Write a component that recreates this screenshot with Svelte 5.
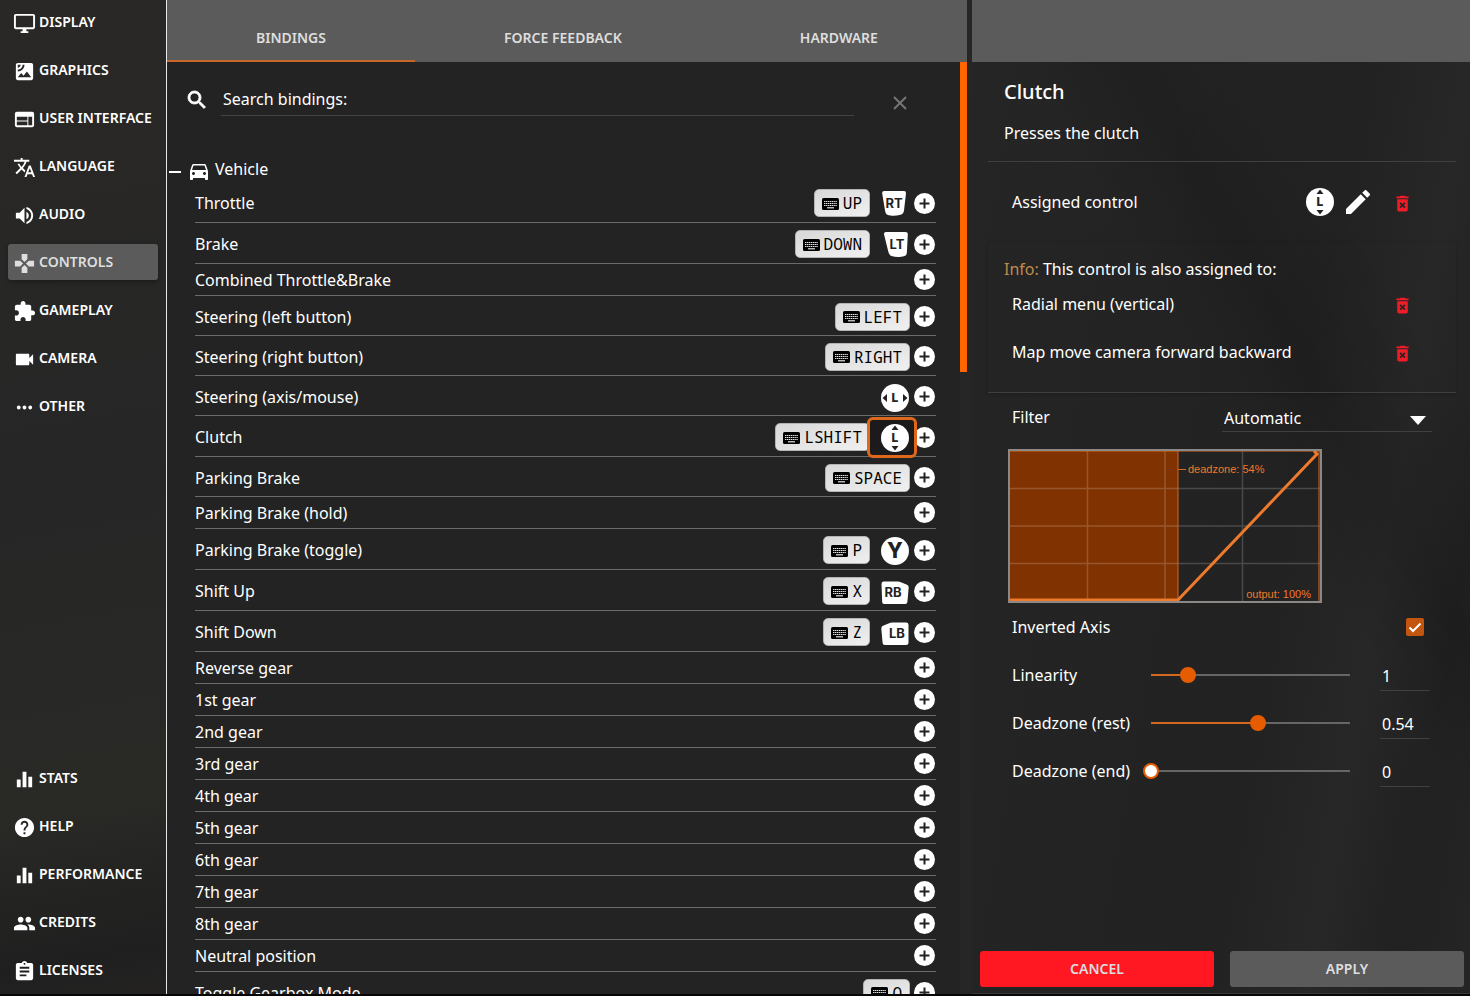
<script>
    const icons = {
        display: "M21 2H3c-1.1 0-2 .9-2 2v12c0 1.1.9 2 2 2h7v2H8v2h8v-2h-2v-2h7c1.1 0 2-.9 2-2V4c0-1.1-.9-2-2-2zm0 14H3V4h18v12z",
        graphics: "M19 3H5c-1.1 0-2 .9-2 2v14c0 1.1.9 2 2 2h14c1.1 0 2-.9 2-2V5c0-1.1-.9-2-2-2zM5 4.99h3C8 6.65 6.66 8 5 8V4.99zM5 12v-2c2.76 0 5-2.25 5-5.01h2C12 8.86 8.87 12 5 12zm0 6l3.5-4.5 2.5 3.01L14.5 12l4.5 6H5z",
        web: "M20 4H4c-1.1 0-1.99.9-1.99 2L2 18c0 1.1.9 2 2 2h16c1.1 0 2-.9 2-2V6c0-1.1-.9-2-2-2zm-5 14H4v-4h11v4zm0-5H4V9h11v4zm5 5h-4V9h4v9z",
        language: "M12.87 15.07l-2.54-2.51.03-.03c1.74-1.94 2.98-4.17 3.71-6.53H17V4h-7V2H8v2H1v1.99h11.17C11.5 7.92 10.44 9.75 9 11.35 8.07 10.32 7.3 9.19 6.69 8h-2c.73 1.63 1.73 3.17 2.98 4.56l-5.09 5.02L4 19l5-5 3.11 3.11.76-2.04zM18.5 10h-2L12 22h2l1.12-3h4.75L21 22h2l-4.5-12zm-2.62 7l1.62-4.33L19.12 17h-3.24z",
        audio: "M3 9v6h4l5 5V4L7 9H3zm13.5 3c0-1.77-1.02-3.29-2.5-4.03v8.05c1.48-.73 2.5-2.25 2.5-4.02zM14 3.23v2.06c2.89.86 5 3.54 5 6.71s-2.11 5.85-5 6.71v2.06c4.01-.91 7-4.49 7-8.77s-2.99-7.86-7-8.77z",
        controls: "M15 7.5V2H9v5.5l3 3 3-3zM7.5 9H2v6h5.5l3-3-3-3zM9 16.5V22h6v-5.5l-3-3-3 3zM16.5 9l-3 3 3 3H22V9h-5.5z",
        gameplay: "M20.5 11H19V7c0-1.1-.9-2-2-2h-4V3.5C13 2.12 11.88 1 10.5 1S8 2.12 8 3.5V5H4c-1.1 0-1.99.9-1.99 2v3.8H3.5c1.49 0 2.7 1.21 2.7 2.7s-1.21 2.7-2.7 2.7H2V20c0 1.1.9 2 2 2h3.8v-1.5c0-1.49 1.21-2.7 2.7-2.7 1.49 0 2.7 1.21 2.7 2.7V22H17c1.1 0 2-.9 2-2v-4h1.5c1.38 0 2.5-1.12 2.5-2.5S21.88 11 20.5 11z",
        camera: "M17 10.5V7c0-.55-.45-1-1-1H4c-.55 0-1 .45-1 1v10c0 .55.45 1 1 1h12c.55 0 1-.45 1-1v-3.5l4 4v-11l-4 4z",
        other: "M6 10c-1.1 0-2 .9-2 2s.9 2 2 2 2-.9 2-2-.9-2-2-2zm12 0c-1.1 0-2 .9-2 2s.9 2 2 2 2-.9 2-2-.9-2-2-2zm-6 0c-1.1 0-2 .9-2 2s.9 2 2 2 2-.9 2-2-.9-2-2-2z",
        stats: "M10 20h4V4h-4v16zm-6 0h4v-8H4v8zM16 9v11h4V9h-4z",
        help: "M12 2C6.48 2 2 6.48 2 12s4.48 10 10 10 10-4.48 10-10S17.52 2 12 2zm1 17h-2v-2h2v2zm2.07-7.75l-.9.92C13.45 12.9 13 13.5 13 15h-2v-.5c0-1.1.45-2.1 1.17-2.83l1.24-1.26c.37-.36.59-.86.59-1.41 0-1.1-.9-2-2-2s-2 .9-2 2H8c0-2.21 1.79-4 4-4s4 1.79 4 4c0 .88-.36 1.68-.93 2.25z",
        credits: "M16 11c1.66 0 2.99-1.34 2.99-3S17.66 5 16 5c-1.66 0-3 1.34-3 3s1.34 3 3 3zm-8 0c1.66 0 2.99-1.34 2.99-3S9.66 5 8 5C6.34 5 5 6.34 5 8s1.34 3 3 3zm0 2c-2.33 0-7 1.17-7 3.5V19h14v-2.5c0-2.33-4.67-3.5-7-3.5zm8 0c-.29 0-.62.02-.97.05 1.16.84 1.97 1.97 1.97 3.45V19h6v-2.5c0-2.33-4.67-3.5-7-3.5z",
        licenses: "M19 3h-4.18C14.4 1.84 13.3 1 12 1c-1.3 0-2.4.84-2.82 2H5c-1.1 0-2 .9-2 2v14c0 1.1.9 2 2 2h14c1.1 0 2-.9 2-2V5c0-1.1-.9-2-2-2zm-7 0c.55 0 1 .45 1 1s-.45 1-1 1-1-.45-1-1 .45-1 1-1zm2 14H7v-2h7v2zm3-4H7v-2h10v2zm0-4H7V7h10v2z",
        search: "M15.5 14h-.79l-.28-.27C15.41 12.59 16 11.11 16 9.5 16 5.91 13.09 3 9.5 3S3 5.91 3 9.5 5.91 16 9.5 16c1.61 0 3.09-.59 4.23-1.57l.27.28v.79l5 4.99L20.49 19l-4.99-5zm-6 0C7.01 14 5 11.99 5 9.5S7.01 5 9.5 5 14 7.01 14 9.5 11.99 14 9.5 14z",
        car: "M18.92 6.01C18.72 5.42 18.16 5 17.5 5h-11c-.66 0-1.21.42-1.42 1.01L3 12v8c0 .55.45 1 1 1h1c.55 0 1-.45 1-1v-1h12v1c0 .55.45 1 1 1h1c.55 0 1-.45 1-1v-8l-2.08-5.99zM6.5 16c-.83 0-1.5-.67-1.5-1.5S5.67 13 6.5 13s1.5.67 1.5 1.5S7.33 16 6.5 16zm11 0c-.83 0-1.5-.67-1.5-1.5s.67-1.5 1.5-1.5 1.5.67 1.5 1.5-.67 1.5-1.5 1.5zM5 11l1.5-4.5h11L19 11H5z",
        edit: "M3 17.25V21h3.75L17.81 9.94l-3.75-3.75L3 17.25zM20.71 7.04c.39-.39.39-1.02 0-1.41l-2.34-2.34c-.39-.39-1.02-.39-1.41 0l-1.83 1.83 3.75 3.75 1.83-1.83z",
        trash: "M6 19c0 1.1.9 2 2 2h8c1.1 0 2-.9 2-2V7H6v12zm2.46-7.12l1.41-1.41L12 12.59l2.12-2.12 1.41 1.41L13.41 14l2.12 2.12-1.41 1.41L12 15.41l-2.12 2.12-1.41-1.41L10.59 14l-2.13-2.12zM15.5 4l-1-1h-5l-1 1H5v2h14V4z",
    };

    const menuTop = [
        ["display", "Display"],
        ["graphics", "Graphics"],
        ["web", "User interface"],
        ["language", "Language"],
        ["audio", "Audio"],
        ["controls", "Controls"],
        ["gameplay", "Gameplay"],
        ["camera", "Camera"],
        ["other", "Other"],
    ];
    const menuBottom = [
        ["stats", "Stats"],
        ["help", "Help"],
        ["stats", "Performance"],
        ["credits", "Credits"],
        ["licenses", "Licenses"],
    ];
    const tabs = ["Bindings", "Force Feedback", "Hardware"];

    const bindings = [
        { name: "Throttle", key: "UP", pad: "RT" },
        { name: "Brake", key: "DOWN", pad: "LT" },
        { name: "Combined Throttle&Brake" },
        { name: "Steering (left button)", key: "LEFT" },
        { name: "Steering (right button)", key: "RIGHT" },
        { name: "Steering (axis/mouse)", pad: "LX" },
        { name: "Clutch", key: "LSHIFT", pad: "LY" },
        { name: "Parking Brake", key: "SPACE" },
        { name: "Parking Brake (hold)" },
        { name: "Parking Brake (toggle)", key: "P", pad: "Y" },
        { name: "Shift Up", key: "X", pad: "RB" },
        { name: "Shift Down", key: "Z", pad: "LB" },
        { name: "Reverse gear" },
        { name: "1st gear" },
        { name: "2nd gear" },
        { name: "3rd gear" },
        { name: "4th gear" },
        { name: "5th gear" },
        { name: "6th gear" },
        { name: "7th gear" },
        { name: "8th gear" },
        { name: "Neutral position" },
        { name: "Toggle Gearbox Mode", key: "Q" },
    ];
    const conflicts = ["Radial menu (vertical)", "Map move camera forward backward"];

    let page = $state("Controls");
    let tab = $state("Bindings");
    let selected = $state("Clutch");
    let search = $state("");
    let inverted = $state(true);
    let filter = $state("Automatic");
    let sliders = $state([
        { id: "linearity", name: "Linearity", min: 0.1, max: 5, value: 1 },
        { id: "deadzone-rest", name: "Deadzone (rest)", min: 0, max: 1, value: 0.54 },
        { id: "deadzone-end", name: "Deadzone (end)", min: 0, max: 1, value: 0 },
    ]);

    let shown = $derived(bindings.filter((b) => b.name.toLowerCase().includes(search.toLowerCase())));
    let dead = $derived(sliders[1].value);
    let deadX = $derived(Math.round(dead * 310) + 1);

    function fill(s) {
        return (s.value - s.min) / (s.max - s.min);
    }
</script>

{#snippet icon(name)}
    <svg class="icon" viewBox="0 0 24 24" aria-hidden="true"><path d={icons[name]} /></svg>
{/snippet}

{#snippet padIcon(type)}
    <svg class="pad-icon" viewBox="0 0 28 28" aria-hidden="true">
        {#if type === "RT"}
            <path d="M3.5 1h19.500q2.200 0 2 2.200l-2 17.300q-.4 3.400-3.500 4.300-4 1.200-8.500 1-3.800-.2-5.200-1.300-1.200-.9-1.600-3L1.200 3.400Q1 1 3.500 1z" />
            <text x="13" y="18">RT</text>
        {:else if type === "LT"}
            <path d="M5 1h19.500q2.500 0 2.300 2.400l-.9 18.100q-.2 2.500-1.700 3.200-1.900 1.100-5.700 1.300-4.500.2-8-.9-2.600-.9-3.100-4L3 3.200Q2.800 1 5 1z" />
            <text x="16" y="18">LT</text>
        {:else if type === "RB"}
            <path d="M2.500 3.500h14q2 0 4 .9l5.500 2.300q1.800.8 1.700 2.800l-1.300 14.500q-.2 2-2.200 2H3q-1.600 0-1.800-1.800L.5 6q-.1-2.500 2-2.500z" />
            <text x="12" y="19">RB</text>
        {:else if type === "LB"}
            <path d="M25.500 3.500h-14q-2 0-4 .9L2 6.700Q.2 7.500.3 9.500L1.600 24q.2 2 2.200 2H25q2.500 0 2.500-2V6q0-2.500-2-2.500z" />
            <text x="16" y="19">LB</text>
        {:else}
            <circle cx="14" cy="14" r="14" />
            {#if type === "Y"}
                <text class="big" x="14" y="21">Y</text>
            {:else}
                <text class="small" x="14" y="18">L</text>
                {#if type === "LX"}
                    <path class="arrow" d="M6 10v8l-4.500-4zM22 10v8l4.500-4z" />
                {:else}
                    <path class="arrow" d="M10.500 6h7L14 1.500zM10.500 22h7L14 26.500z" />
                {/if}
            {/if}
        {/if}
    </svg>
{/snippet}

{#snippet menuItem(item)}
    <button class="menu-item" class:active={page === item[1]} onclick={() => (page = item[1])}>
        {@render icon(item[0])}
        <span>{item[1]}</span>
    </button>
{/snippet}

<div class="options">
    <nav class="sidebar">
        <div class="menu">
            {#each menuTop as item}
                {@render menuItem(item)}
            {/each}
        </div>
        <div class="menu">
            {#each menuBottom as item}
                {@render menuItem(item)}
            {/each}
        </div>
    </nav>

    <main class="bindings">
        <div class="tabs">
            {#each tabs as t}
                <button class:active={tab === t} onclick={() => (tab = t)}>{t}</button>
            {/each}
        </div>
        <div class="scroll">
            <div class="content">
                <div class="search">
                    <label for="search" aria-label="Search bindings">{@render icon("search")}</label>
                    <input id="search" type="text" placeholder="Search bindings:" bind:value={search} />
                    <button aria-label="Clear search" onclick={() => (search = "")}>
                        <svg viewBox="0 0 14 14"><path d="M1 1l12 12M13 1L1 13" /></svg>
                    </button>
                </div>
                <h2 class="category">
                    <span class="dash"></span>
                    {@render icon("car")}
                    <span>Vehicle</span>
                </h2>
                <ul>
                    {#each shown as b}
                        <li class:bound={b.key || b.pad} class:both={b.key && b.pad}>
                            <span class="name">{b.name}</span>
                            {#if b.key}
                                <button class="key">
                                    <svg viewBox="0 0 17 12" aria-hidden="true">
                                        <rect width="17" height="12" rx="1.500" />
                                        <path class="keys" d="M2 3.500h13M2 5.500h13M2 7.500h13" />
                                        <path class="space" d="M5 9.800h7" />
                                    </svg>
                                    <span>{b.key}</span>
                                </button>
                            {/if}
                            {#if b.pad}
                                <button class="pad" class:selected={selected === b.name} aria-label={b.pad} onclick={() => (selected = b.name)}>
                                    {@render padIcon(b.pad)}
                                </button>
                            {/if}
                            <button class="add" aria-label="Add binding">
                                <svg viewBox="0 0 21 21"><circle cx="10.500" cy="10.500" r="10.500" /><path d="M10.500 5.500v10M5.500 10.500h10" /></svg>
                            </button>
                        </li>
                    {/each}
                </ul>
            </div>
            <div class="scrollbar"><div class="thumb"></div></div>
        </div>
    </main>

    <aside class="details">
        <div class="bar"></div>
        <div class="info">
            <h1>Clutch</h1>
            <p>Presses the clutch</p>
        </div>
        <div class="line assigned">
            <span class="name">Assigned control</span>
            {@render padIcon("LY")}
            <button class="edit" aria-label="Edit">{@render icon("edit")}</button>
            <button class="delete" aria-label="Remove">{@render icon("trash")}</button>
        </div>
        <div class="conflicts">
            <p><span class="warn">Info:</span> This control is also assigned to:</p>
            {#each conflicts as c}
                <div class="line">
                    <span class="name">{c}</span>
                    <button class="delete" aria-label="Remove">{@render icon("trash")}</button>
                </div>
            {/each}
        </div>
        <div class="filter">
            <label for="filter">Filter</label>
            <div class="select">
                <select id="filter" bind:value={filter}>
                    <option>Automatic</option>
                    <option>Direct</option>
                </select>
                <svg viewBox="0 0 16 9" aria-hidden="true"><path d="M0 0h16L8 9z" /></svg>
            </div>
        </div>
        <svg class="graph" viewBox="0 0 310 150">
            <path class="grid" d="M232.500 0v150M0 37.500h310M0 75h310M0 112.500h310" />
            <rect class="dead" width={deadX} height="150" />
            <path class="grid" d="M77.500 0v150M155 0v150M0 37.500h{deadX}M0 75h{deadX}M0 112.500h{deadX}" />
            <path class="edge" d="M{deadX} 0v150M{deadX} 18.500h8M0 0h310M309 0v150" />
            <path class="curve" d="M0 149h{deadX}L307 3l-3-3" />
            <text x={deadX + 10} y="22">deadzone: {Math.round(dead * 100)}%</text>
            <text x="301" y="147" text-anchor="end">output: 100%</text>
        </svg>
        <div class="line check">
            <label class="name" for="inverted">Inverted Axis</label>
            <input id="inverted" type="checkbox" bind:checked={inverted} />
            <svg viewBox="0 0 18 18" aria-hidden="true"><path d="M3.500 9.500l3.500 3.500L14.500 5.500" /></svg>
        </div>
        {#each sliders as s}
            <div class="slider">
                <label for={s.id}>{s.name}</label>
                <input id={s.id} type="range" class:zero={s.value === s.min} min={s.min} max={s.max} step="0.01" style="--fill: {fill(s)}" bind:value={s.value} />
                <input type="text" aria-label={s.name} bind:value={s.value} />
            </div>
        {/each}
        <div class="actions">
            <button class="cancel">Cancel</button>
            <button>Apply</button>
        </div>
    </aside>
</div>

<style>
    :global(body) {
        margin: 0;
        background: #000;
    }

    .options {
        display: grid;
        grid-template-columns: 166px minmax(0, 1fr) 498px;
        grid-template-rows: minmax(0, 1fr);
        height: 100vh;
        box-sizing: border-box;
        border-bottom: 2px solid #080606;
        background: #262626;
        color: #fff;
        font-family: "Noto Sans", "Open Sans", sans-serif;
        font-size: 16px;
        font-weight: 450;
        line-height: 24px;
        overflow: hidden;
    }

    button {
        padding: 0;
        border: none;
        background: none;
        color: inherit;
        font: inherit;
        cursor: pointer;
    }

    svg {
        display: block;
        flex: none;
    }

    h1, h2, p, ul {
        margin: 0;
        padding: 0;
    }

    .icon {
        width: 24px;
        height: 24px;
        fill: #fff;
    }

    .name {
        flex: 1;
    }

    .sidebar {
        display: flex;
        flex-direction: column;
        justify-content: space-between;
        padding: 4px 8px 6px;
        background: linear-gradient(170deg, #292826 0%, #262626 50%, #292926 80%, #1f1f1f 95%, #242322 100%);
    }

    .menu {
        display: flex;
        flex-direction: column;
        gap: 12px;
    }

    .menu-item {
        display: flex;
        align-items: center;
        gap: 3px;
        height: 36px;
        padding: 0 5px;
        border-radius: 3px;
        font-size: 14px;
        font-weight: 600;
        text-transform: uppercase;
        white-space: nowrap;
    }

    .menu-item .icon {
        width: 23px;
        height: 23px;
        margin-top: 3px;
    }

    .menu-item.active {
        background: #5b5b5b;
        box-shadow: 0 2px 4px rgba(0, 0, 0, 0.3);
        color: #dedede;
    }

    .menu-item.active .icon {
        fill: #dedede;
    }

    .bindings {
        display: flex;
        flex-direction: column;
        border-left: 1px solid #e8e8e8;
        background: #232323;
        margin-right: 5px;
    }

    .tabs {
        display: flex;
        height: 62px;
        flex: none;
        background: #5b5b5b;
    }

    .tabs button {
        flex: 1 1 auto;
        padding: 16px 0 0;
        border-bottom: 2px solid transparent;
        color: #dedede;
        font-size: 14px;
        font-weight: 600;
        text-transform: uppercase;
    }

    .tabs button.active {
        border-color: #c8672a;
    }

    .scroll {
        display: flex;
        flex: 1;
        min-height: 0;
    }

    .content {
        flex: 1;
        overflow: hidden;
    }

    .scrollbar {
        width: 7px;
        background: #262626;
    }

    .thumb {
        height: 33.3%;
        background: #ff6600;
    }

    .search {
        display: flex;
        align-items: center;
        padding: 22px 53px 0 18px;
    }

    .search .icon {
        stroke: #fff;
        stroke-width: 0.8;
    }

    .search input {
        flex: 1;
        height: 32px;
        margin: 0 39px 0 12px;
        padding: 0 2px 2px;
        box-sizing: border-box;
        border: none;
        border-bottom: 1px solid #444;
        background: none;
        color: #fff;
        font: inherit;
        outline: none;
    }

    .search input::placeholder {
        color: #fff;
        opacity: 1;
    }

    .search button svg {
        width: 14px;
        height: 14px;
        margin-top: 6px;
        fill: none;
        stroke: #757575;
        stroke-width: 2;
    }

    .category {
        display: flex;
        align-items: center;
        gap: 4px;
        height: 24px;
        margin-top: 41px;
        margin-bottom: 1px;
        padding-left: 2px;
        font-size: 16px;
        font-weight: 450;
    }

    .category .icon {
        margin-top: 4px;
    }

    .dash {
        width: 12px;
        height: 2px;
        margin: 6px 2px 0 0;
        background: #fff;
    }

    ul {
        padding: 0 24px 0 28px;
        list-style: none;
    }

    li {
        display: flex;
        align-items: center;
        height: 32px;
        padding-right: 1px;
        box-sizing: border-box;
        border-bottom: 1px solid #6b6b6b;
    }

    li.bound {
        height: 40px;
        padding-top: 2px;
    }

    li.both {
        height: 41px;
    }

    .key {
        display: flex;
        align-items: center;
        gap: 4px;
        height: 28px;
        margin-right: 4px;
        padding: 0 7px;
        border: 1px solid #b4b4b4;
        border-radius: 5px;
        background: linear-gradient(160deg, #d8d8d8, #f0f0f0);
        color: #000;
        font-family: "Noto Sans Mono", "DejaVu Sans Mono", monospace;
        font-size: 16px;
        font-weight: 400;
        box-sizing: border-box;
    }

    .key svg {
        width: 17px;
        height: 12px;
        margin-top: 1px;
    }

    .keys {
        stroke: #e4e4e4;
        stroke-width: 1;
        stroke-dasharray: 1.4 0.5;
    }

    .space {
        stroke: #e4e4e4;
        stroke-width: 1.2;
    }

    .pad-icon {
        width: 28px;
        height: 28px;
        fill: #fff;
    }

    .pad-icon text {
        fill: #222;
        font-family: Inter, "Liberation Sans", sans-serif;
        font-size: 13px;
        font-weight: 700;
        text-anchor: middle;
    }

    .pad-icon .big {
        font-size: 21px;
        font-weight: 800;
    }

    .pad-icon .small {
        font-size: 12px;
        font-weight: 800;
    }

    .pad-icon .arrow {
        fill: #222;
    }

    .pad {
        position: relative;
        z-index: 1;
        margin: 2px 5px 0 7px;
    }

    .pad.selected::before {
        content: "";
        position: absolute;
        inset: -7px -8px -6px -14px;
        z-index: -1;
        border: 3px solid #e0681c;
        border-radius: 6px;
        background: #1c1a1a;
    }

    .add {
        width: 21px;
        height: 21px;
    }

    .add svg {
        width: 21px;
        height: 21px;
        fill: #fff;
        stroke: none;
    }

    .add path {
        stroke: #222;
        stroke-width: 2;
    }

    .details {
        display: flex;
        flex-direction: column;
        background:
            linear-gradient(60deg, transparent 55%, rgba(0, 0, 0, 0.12) 65%, transparent 78%),
            linear-gradient(100deg, #252525 0%, #222 60%, #272727 76%, #212121 88%, #252525 100%);
        border-bottom: 1px solid #3a3838;
    }

    .bar {
        height: 62px;
        background: #5b5b5b;
    }

    .info {
        margin: 0 14px 0 16px;
        padding: 16px 16px 16px;
        border-bottom: 1px solid #404040;
    }

    .info h1 {
        margin-bottom: 16px;
        font-size: 20px;
        font-weight: 500;
        line-height: 27px;
    }

    .line {
        display: flex;
        align-items: center;
        height: 48px;
        padding: 0 57px 0 40px;
    }

    .assigned {
        height: 80px;
    }

    .edit .icon {
        width: 32px;
        height: 32px;
        margin: 0 18px 0 8px;
    }

    .delete .icon {
        width: 21px;
        height: 21px;
        margin-top: 3px;
        fill: #f01c28;
    }

    .conflicts {
        margin: 0 14px 0 16px;
        padding: 15px 0 16px;
        border-bottom: 1px solid #404040;
        box-shadow: 0 1px 4px rgba(0, 0, 0, 0.2);
    }

    .conflicts p {
        height: 23px;
        padding-left: 16px;
    }

    .conflicts .line {
        padding: 0 43px 0 24px;
    }

    .warn {
        color: #c08a4c;
        font-weight: 400;
    }

    .filter {
        display: flex;
        justify-content: space-between;
        height: 40px;
        margin: 0 38px 0 40px;
        padding-top: 12px;
    }

    .select {
        position: relative;
        width: 210px;
    }

    .select select {
        width: 100%;
        height: 27px;
        padding: 0 2px;
        border: none;
        border-bottom: 1px solid #404040;
        border-radius: 0;
        background: none;
        color: #fff;
        font: inherit;
        line-height: 26px;
        appearance: none;
        outline: none;
    }

    .select option {
        background: #262626;
    }

    .select svg {
        position: absolute;
        top: 11px;
        right: 6px;
        width: 16px;
        height: 9px;
        fill: #fff;
        pointer-events: none;
    }

    .graph {
        width: 310px;
        height: 150px;
        margin: 4px 0 0 36px;
        border: 2px solid #8c8886;
    }

    .grid {
        fill: none;
        stroke: rgba(255, 255, 255, 0.18);
        stroke-width: 1.5;
    }

    .dead {
        fill: #803300;
    }

    .edge {
        fill: none;
        stroke: #d2691e;
    }

    .curve {
        fill: none;
        stroke: #ee7a2c;
        stroke-width: 3;
    }

    .graph text {
        fill: #ee7a2c;
        font-family: "Liberation Sans", Arial, sans-serif;
        font-size: 11px;
        font-weight: 400;
    }

    .check {
        padding-right: 46px;
    }

    .check input {
        width: 18px;
        height: 18px;
        margin: 0;
        border-radius: 2px;
        background: #444;
        appearance: none;
    }

    .check input:checked {
        background: #c4550f;
    }

    .check svg {
        width: 18px;
        height: 18px;
        margin-left: -18px;
        z-index: 1;
        fill: none;
        stroke: #fff;
        stroke-width: 2;
        pointer-events: none;
    }

    .slider {
        display: flex;
        align-items: center;
        height: 48px;
        padding: 0 40px;
    }

    .slider label {
        width: 131px;
    }

    .slider input[type="range"] {
        flex: 1;
        min-width: 0;
        height: 16px;
        margin: 0 22px 0 0;
        appearance: none;
        background:
            linear-gradient(#d2691e, #d2691e) 8px center / calc((100% - 16px) * var(--fill)) 2px no-repeat,
            linear-gradient(#666, #666) 8px center / calc(100% - 16px) 2px no-repeat;
    }

    .slider input[type="range"]::-webkit-slider-thumb {
        width: 16px;
        height: 16px;
        box-sizing: border-box;
        border: 2px solid #e65c00;
        border-radius: 50%;
        background: #e65c00;
        appearance: none;
    }

    .slider input.zero::-webkit-slider-thumb {
        background: #fff;
    }

    .slider input[type="text"] {
        width: 50px;
        height: 30px;
        margin-top: 2px;
        padding: 0 2px;
        box-sizing: border-box;
        border: none;
        border-bottom: 1px solid #404040;
        background: none;
        color: #fff;
        font: inherit;
        outline: none;
    }

    .actions {
        display: flex;
        gap: 16px;
        margin-top: auto;
        padding: 6px 6px 6px 8px;
    }

    .actions button {
        flex: 1;
        height: 36px;
        border-radius: 3px;
        background: #5b5b5b;
        color: #dedede;
        font-size: 14px;
        font-weight: 600;
        text-transform: uppercase;
    }

    .actions .cancel {
        background: #ff1722;
    }
</style>
